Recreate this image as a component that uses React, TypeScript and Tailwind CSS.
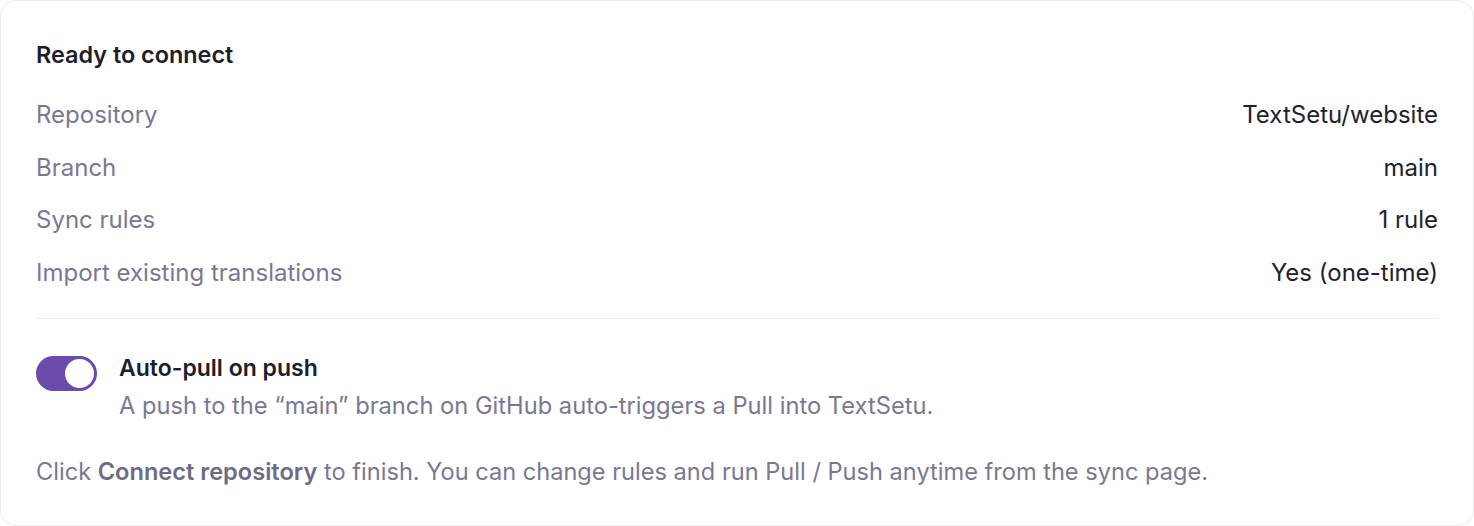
import React, { useState } from 'react';

const rows = [
  { label: 'Repository', value: 'TextSetu/website' },
  { label: 'Branch', value: 'main' },
  { label: 'Sync rules', value: '1 rule' },
  { label: 'Import existing translations', value: 'Yes (one-time)' },
];

export default function App() {
  const [autoPull, setAutoPull] = useState(true);

  return (
    <div className="w-[1474px] h-[526px] bg-white" style={{ fontFamily: 'Inter, "Noto Sans", sans-serif' }}>
      <div className="h-full rounded-2xl border border-[#ecebf1] bg-white px-[35px] pt-[38px]">
        <h2 className="text-[23.4px] leading-[32px] font-semibold text-[#1e1d2b]">Ready to connect</h2>

        <div className="mt-[18px] flex flex-col">
          {rows.map((r) => (
            <div key={r.label} className="flex items-center justify-between h-[52.5px]">
              <span className="text-[24px] leading-[30px] text-[#7a7891]">{r.label}</span>
              <span className="text-[24px] leading-[30px] text-[#22212f]">{r.value}</span>
            </div>
          ))}
        </div>

        <div className="mt-[19px] border-t border-[#ebeaf0]" />

        <div className="mt-[36px] flex gap-[22px]">
          <button
            onClick={() => setAutoPull(!autoPull)}
            className={`mt-[1px] w-[61px] h-[35px] shrink-0 rounded-full p-[3px] flex items-center transition ${
              autoPull ? 'bg-[#6a4aab] justify-end' : 'bg-gray-300 justify-start'
            }`}
          >
            <span className="block w-[29px] h-[29px] rounded-full bg-white" />
          </button>
          <div className="flex flex-col">
            <span className="text-[23px] leading-[26px] font-semibold text-[#1e1d2b]">Auto-pull on push</span>
            <span className="mt-[12px] text-[23.7px] leading-[26px] text-[#7a7891]">
              A push to the “main” branch on GitHub auto-triggers a Pull into TextSetu.
            </span>
          </div>
        </div>

        <p className="mt-[40px] text-[23.6px] leading-[26px] text-[#7a7891]">
          Click <span className="font-semibold text-[#6e6c85]">Connect repository</span> to finish. You can change rules and run Pull / Push anytime from the sync page.
        </p>
      </div>
    </div>
  );
}
